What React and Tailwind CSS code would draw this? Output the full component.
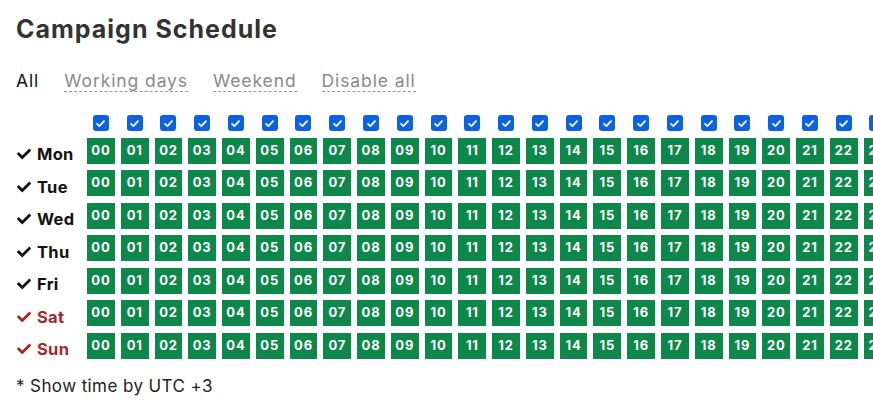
import React from "react";
import { FaCheck } from "react-icons/fa";

const days = [
  { name: "Mon", weekend: false },
  { name: "Tue", weekend: false },
  { name: "Wed", weekend: false },
  { name: "Thu", weekend: false },
  { name: "Fri", weekend: false },
  { name: "Sat", weekend: true },
  { name: "Sun", weekend: true },
];
const hours = Array.from({ length: 24 }, (_, i) => String(i).padStart(2, "0"));

function Box() {
  return (
    <div className="w-4 h-4 rounded-[3px] bg-[#0d62e0] flex items-center justify-center">
      <svg width="11" height="11" viewBox="0 0 12 12" fill="none">
        <path d="M2.2 6.3 L4.8 8.8 L9.8 3.4" stroke="white" strokeWidth="1.9" strokeLinecap="round" strokeLinejoin="round" />
      </svg>
    </div>
  );
}

export default function App() {
  return (
    <div className="w-[873px] h-[410px] overflow-hidden bg-white pl-4 pt-[13px] text-[#333]" style={{ fontFamily: "Inter, 'Noto Sans', sans-serif" }}>
      <h1 className="text-[25px] font-bold tracking-[1px] leading-[32px] text-[#333]">Campaign Schedule</h1>
      <div className="flex items-center gap-[25px] mt-[25px] text-[17.5px] leading-[22px] tracking-[0.9px]">
        <span className="text-[#111]">All</span>
        <span className="text-[#8a8a8a] border-b border-dashed border-[#999] leading-[20px]">Working days</span>
        <span className="text-[#8a8a8a] border-b border-dashed border-[#999] leading-[20px]">Weekend</span>
        <span className="text-[#8a8a8a] border-b border-dashed border-[#999] leading-[20px]">Disable all</span>
      </div>
      <div className="mt-[23px] grid grid-cols-[65px_repeat(24,27.77px)] gap-x-[6px] gap-y-[6.5px] w-max">
        <div className="h-4" />
        {hours.map((h) => (
          <div key={h} className="flex justify-center">
            <Box />
          </div>
        ))}
        {days.map((d) => (
          <React.Fragment key={d.name}>
            <div className={`h-[26px] flex items-center gap-[5px] pt-[7px] leading-[18px] text-[16.5px] font-bold tracking-[0.3px] ${d.weekend ? "text-[#a12a2a]" : "text-[#111]"}`}>
              <FaCheck className="w-[16px] h-[14px]" />
              <span>{d.name}</span>
            </div>
            {hours.map((h) => (
              <div key={h} className="h-[26px] bg-[#0e874b] text-white text-[13px] font-bold flex items-center justify-center tracking-[0.8px]">
                {h}
              </div>
            ))}
          </React.Fragment>
        ))}
      </div>
      <div className="mt-[16px] text-[17px] leading-[22px] text-[#222] tracking-[0.4px]">* Show time by UTC +3</div>
    </div>
  );
}
